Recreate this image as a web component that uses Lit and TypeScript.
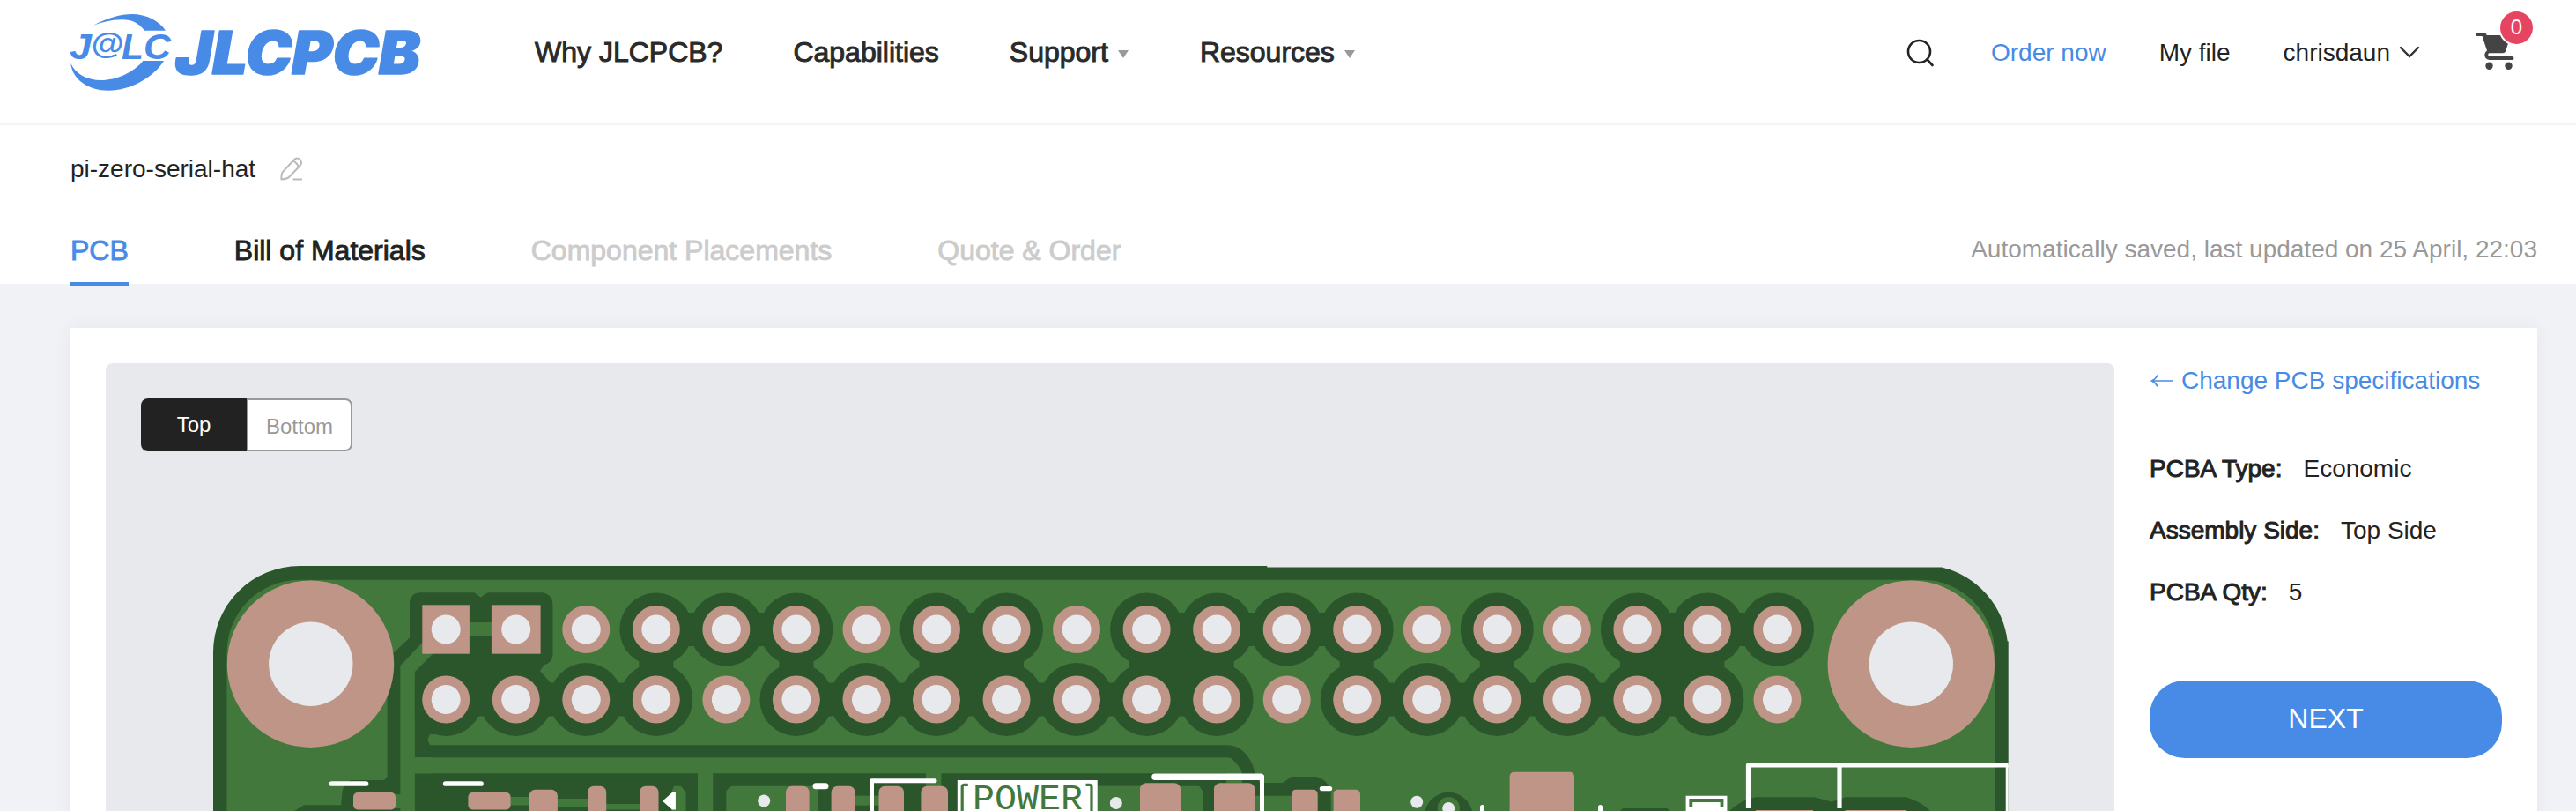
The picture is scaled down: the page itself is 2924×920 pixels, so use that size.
import { LitElement, html, svg, css } from "lit";
import { customElement, property } from "lit/decorators.js";

const PITCH = 79.54;
const FIRST = 506.2;
const ROWS = [714, 793.5];
const CLEAR = ["11011101101111010111", "11110111111101111110"];
const DARK = "#2b562c";
const LIGHT = "#43783c";
const PAD = "#be9586";
const BG = "#e7e9ed";

const px = (i: number) => FIRST + i * PITCH;
const has = (r: number, i: number) => i >= 0 && i < 20 && CLEAR[r][i] === "1";

@customElement("pcb-board")
export class PcbBoard extends LitElement {
  static styles = css`
    :host { display: block; width: 2280px; height: 508px; }
    svg { display: block; }
    .silk { font: 40px "Liberation Mono", monospace; }
  `;

  private clearances() {
    const out: unknown[] = [];
    for (let r = 0; r < 2; r++) {
      for (let i = 0; i < 20; i++) {
        if (!has(r, i) || (r === 0 && i < 2)) continue;
        out.push(svg`<circle cx=${px(i)} cy=${ROWS[r]} r="41.5"/>`);
        if (has(r, i + 1)) out.push(svg`<rect x=${px(i)} y=${ROWS[r] - 19} width=${PITCH} height="38"/>`);
        if (r === 0 && has(1, i)) {
          out.push(svg`<rect x=${px(i) - 19.5} y=${ROWS[0]} width="39" height="79.5"/>`);
          if (has(0, i + 1) && has(1, i + 1)) out.push(svg`<rect x=${px(i)} y=${ROWS[0]} width=${PITCH} height="79.5"/>`);
        }
      }
    }
    return out;
  }

  private pads() {
    const out: unknown[] = [];
    for (let r = 0; r < 2; r++)
      for (let i = 0; i < 20; i++) {
        if (!(r === 0 && i < 2)) out.push(svg`<circle cx=${px(i)} cy=${ROWS[r]} r="27" fill=${PAD}/>`);
      }
    return out;
  }

  private holes() {
    return ROWS.flatMap((y) => Array.from({ length: 20 }, (_, i) => svg`<circle cx=${px(i)} cy=${y} r="16.5"/>`));
  }

  private smd(x1: number, x2: number, y: number, h = 60, r = 7) {
    return svg`<rect x=${x1} y=${y} width=${x2 - x1} height=${h} rx=${r}/>`;
  }

  render() {
    return html`<svg width="2280" height="508" viewBox="120 412 2280 508">
      <path fill=${DARK} d="M242 930V740A98 98 0 0 1 340 642H1438.300V643.500H2204A98 98 0 0 1 2278.700 727.500H2279.700V930Z"/>
      <path fill=${LIGHT} d="M257.500 930V740A82.500 82.500 0 0 1 340 657.700H2181.300A82.700 82.700 0 0 1 2264 740.400V930Z"/>
      <g fill=${DARK}>
        ${this.clearances()}
        <path d="M465 683Q466 673 476 672.300H538Q542 674 545.700 677.700Q549 674 554 672.300H616Q627 674 627.500 686V744Q626 752 618 754L613 761L626 776V793H506V833H488L485.400 839L488 845.300H1393.600C1409 846 1420 858 1425 877V886H1410V877C1407 869 1402 864 1397 860L1392 859.300H470.700V762L454.600 755V930H345L334 920L345 913.300H387L389 895L398 885H436L439.600 881V740H447.500L465 723.300Z"/>
        <path d="M470.700 877.300H792V930H778.600V899L773 891.700H765L762 899V930H470.700Z"/>
        <path d="M809.300 877.300H1051V930H928.600V891.700H830L824.300 897V930H809.300Z"/>
        <path d="M1068.600 877.300H1392V888H1410V877H1425L1430 888H1456L1466 881H1494.600Q1504 884 1507 890L1510.700 897V930H1466V902.700H1424V930H1365V897L1361 891.700H1068.600Z"/>
        <rect x="1068.600" y="880" width="19" height="50"/>
        <path d="M1617 930A27.500 27.500 0 1 1 1671.500 930Z"/>
        <path d="M1839 920L1842 917H1892L1896 920Z"/>
        <path d="M1963 920Q1975 908 1993 904.300H2059L2070 907L2078.600 909.500L2088 907L2094.600 904.300H2163.600Q2182 910 2191 920Z"/>
      </g>
      <g fill=${LIGHT}>
        <path d="M454.600 930V755L479.300 729L492 741L470.700 762.300V930Z"/>
        <rect x="470" y="859.300" width="20" height="18"/>
        <rect x="532" y="706" width="27" height="16"/>
        <rect x="446" y="901" width="12" height="16"/>
        <rect x="579" y="904" width="23" height="9.500"/>
        <rect x="632" y="906" width="36" height="9"/>
        <rect x="687" y="912" width="40" height="6.500"/>
        <rect x="970" y="902.700" width="28" height="11"/>
        <rect x="1245" y="891.700" width="50" height="29"/>
        <circle cx="1644.300" cy="916.700" r="12.700"/>
      </g>
      <g fill=${PAD}>
        <circle cx="352.500" cy="753.200" r="94.700"/>
        <circle cx="2169.300" cy="753.200" r="94.700"/>
        <rect x="479.300" y="686.300" width="53.600" height="55.400"/>
        <rect x="557.900" y="686.300" width="55.700" height="55.400"/>
        ${this.smd(401, 449, 899, 19.4, 5)}
        ${this.smd(531.4, 579.6, 899, 19.4, 5)}
        ${this.smd(600.7, 632.9, 895.7)}
        ${this.smd(667, 688.2, 891.7)}
        ${this.smd(726, 747.5, 891.7)}
        ${this.smd(892, 918.6, 891.7)}
        ${this.smd(943.6, 970.7, 891.7)}
        ${this.smd(997.5, 1026, 891.7)}
        ${this.smd(1045.4, 1076, 891.7)}
        ${this.smd(1294, 1340, 888.3)}
        ${this.smd(1378, 1424.3, 888.3)}
        ${this.smd(1466, 1495.7, 895.7, 60, 5)}
        ${this.smd(1513.6, 1544, 895.7, 60, 5)}
        ${this.smd(1713.6, 1787, 875.7, 60, 5)}
        <rect x="1993" y="919" width="65" height="3"/>
        <rect x="2094.600" y="919" width="69" height="3"/>
      </g>
      ${this.pads()}
      <g fill=${BG}>
        ${this.holes()}
        <circle cx="352.800" cy="753.200" r="47.700"/>
        <circle cx="2169.300" cy="753.200" r="47.700"/>
        <circle cx="867.200" cy="908.500" r="7"/>
        <circle cx="1266.800" cy="911" r="7"/>
        <circle cx="1608.200" cy="909.700" r="7"/>
        <circle cx="1644.200" cy="917" r="7"/>
      </g>
      <g fill="none" stroke="#fff" stroke-linecap="round" stroke-linejoin="round">
        <path stroke-width="5.700" d="M376.500 889H415.500M505.700 889H546"/>
        <path stroke-width="7" d="M926 891.800H937"/>
        <path stroke-width="5" d="M989.500 930V885.700H1061"/>
        <path stroke-width="7.500" d="M1311 881.200H1431"/>
        <path stroke-width="5" d="M1432.500 881V930M1682.500 915.500V930M1816.500 915.500V930"/>
        <path stroke-width="5.400" d="M1500.500 894.600H1509.500"/>
        <path stroke-width="5.200" stroke-linecap="butt" d="M1984.500 917V868H2279.700M2088 868V917"/>
        <path stroke-width="2.900" stroke-linecap="butt" d="M2278.200 868V930"/>
      </g>
      <path fill="#fff" d="M752 908.700L763 899H766.900V918.500H763ZM1086.800 885H1245.700V930H1086.800ZM1913.600 902.700H1960.400V930H1913.600Z"/>
      <g fill="none" stroke=${LIGHT}>
        <path stroke-width="3.200" d="M1098.800 890.400H1094Q1092.200 890.600 1092.200 893V930M1232.500 890.400H1237Q1239 890.600 1239 893V930"/>
        <path stroke-width="3.800" d="M1919.300 915.500V908H1954.500V915.500"/>
      </g>
      <text class="silk" x="1104" y="918.300" fill=${LIGHT} textLength="125" lengthAdjust="spacingAndGlyphs">POWER</text>
    </svg>`;
  }
}

@customElement("site-header")
export class SiteHeader extends LitElement {
  static styles = css`
    :host { display: block; }
    .bar { box-sizing: border-box; height: 142px; padding: 0 48px 0 80px; border-bottom: 2px solid #f3f4f9; display: flex; align-items: flex-start; background: #fff; }
    .logo { display: block; width: 400px; height: 110px; margin-right: 127px; }
    .mark { font: italic 700 41px "Liberation Sans", sans-serif; }
    .at { font: italic 700 34px "Liberation Sans", sans-serif; }
    .word { font: italic 900 68px Inter, "Liberation Sans", sans-serif; stroke: #488be7; stroke-width: 1.6px; stroke-linejoin: round; }
    .nav { display: flex; height: 119px; align-items: center; gap: 80px; font-size: 32px; color: #2a2a2a; -webkit-text-stroke: 1px #2a2a2a; }
    .item { display: flex; align-items: center; white-space: nowrap; }
    .item:last-child { margin-left: 1px; }
    .caret { width: 0; height: 0; border: 6px solid transparent; border-top: 9px solid #999; border-bottom: 0; margin: 4px 0 0 11px; }
    .tools { margin-left: auto; display: flex; height: 119px; align-items: center; font-size: 28px; color: #222; white-space: nowrap; }
    .search { margin-right: 64px; }
    .order { color: #488be7; margin-right: 60px; }
    .file { margin-right: 60px; }
    .chev { margin: 0 63px 2px 10px; }
    .cart { position: relative; display: flex; width: 66px; margin-bottom: 4px; }
    .badge { position: absolute; left: 28px; top: -23px; width: 37px; height: 37px; border-radius: 50%; background: #e64562; color: #fff; font-size: 24px; line-height: 36px; text-align: center; box-shadow: 0 0 0 2px #fff; }
  `;

  render() {
    return html`<header class="bar">
      <svg class="logo" viewBox="80 0 400 110" fill="#488be7">
        <path d="M105.700 29C122 20 137 16 150 16C166 16 181 24 188 34.700H164.300C156 25 149 22 138 22.300C126 22.500 116 25 105.700 29Z"/>
        <path d="M80.300 71.700C82 90 100 102.700 123.300 102.700C148 102.700 174 88 186 69H162.300C152 82 132 91 115 91C98 91 85 83 80.300 71.700Z"/>
        <text class="mark" x="79" y="66.500" textLength="25" lengthAdjust="spacingAndGlyphs">J</text>
        <text class="at" x="103" y="60.500" textLength="37" lengthAdjust="spacingAndGlyphs">@</text>
        <text class="mark" x="138" y="66.500" textLength="25" lengthAdjust="spacingAndGlyphs">L</text>
        <text class="mark" x="163" y="66.500" textLength="31" lengthAdjust="spacingAndGlyphs">C</text>
        <text class="word" x="199" y="84" textLength="278" lengthAdjust="spacingAndGlyphs">JLCPCB</text>
      </svg>
      <nav class="nav">
        <span class="item">Why JLCPCB?</span>
        <span class="item">Capabilities</span>
        <span class="item">Support<i class="caret"></i></span>
        <span class="item">Resources<i class="caret"></i></span>
      </nav>
      <div class="tools">
        <svg class="search" width="32" height="32" viewBox="0 0 32 32" fill="none" stroke="#222" stroke-width="2.600" stroke-linecap="round"><circle cx="14.500" cy="14.500" r="12.500"/><path d="M23.500 23.500L29.500 30"/></svg>
        <span class="order">Order now</span>
        <span class="file">My file</span>
        <span>chrisdaun</span>
        <svg class="chev" width="24" height="14" viewBox="0 0 24 14" fill="none" stroke="#333" stroke-width="2.400" stroke-linecap="round"><path d="M2 2L12 12L22 2"/></svg>
        <div class="cart">
          <svg width="44" height="44" viewBox="0 0 44 44" fill="#444"><path d="M2 1H10Q11.500 1 12 2.500L12.700 4H40L34 22.500Q33.200 24.300 31 24.300H15.500Q14.300 24.500 14.200 26Q14.300 28 16 28H41.500Q43.500 28.300 43.500 30Q43.500 32 41.500 32H16Q11 31.500 10.300 27Q10.300 23 13 21.500L7.500 5H2Q.2 4.800 .2 3Q.2 1.200 2 1Z"/><circle cx="15.500" cy="38.800" r="4.200"/><circle cx="37.500" cy="38.800" r="4.200"/></svg>
          <span class="badge">0</span>
        </div>
      </div>
    </header>`;
  }
}

@customElement("spec-row")
export class SpecRow extends LitElement {
  @property() label = "";
  @property() value = "";
  static styles = css`
    :host { display: flex; gap: 24px; height: 70px; align-items: center; font-size: 28px; color: #222; white-space: nowrap; }
    .label { -webkit-text-stroke: 1px #222; }
  `;
  render() {
    return html`<span class="label">${this.label}:</span><span>${this.value}</span>`;
  }
}

@customElement("app-root")
export class AppRoot extends LitElement {
  static styles = css`
    :host { display: block; height: 920px; overflow: hidden; background: #f0f2f6; font-family: "Liberation Sans", Arial, sans-serif; }
    .project { height: 180px; box-sizing: border-box; background: #fff; padding: 0 44px 0 80px; display: flex; flex-direction: column; }
    .name { display: flex; align-items: center; gap: 27px; height: 100px; font-size: 28px; color: #222; }
    .tabs { display: flex; gap: 120px; height: 80px; font-size: 32px; }
    .tab { height: 82px; box-sizing: border-box; line-height: 85px; white-space: nowrap; color: #222; -webkit-text-stroke: 0.9px currentColor; }
    .active { color: #488be7; border-bottom: 4px solid #488be7; }
    .off { color: #ccc; }
    .saved { margin-left: auto; font-size: 28px; line-height: 81px; color: #999; }
    .card { margin: 50px 44px 0 80px; height: 600px; box-sizing: border-box; padding: 40px 40px 0; background: #fff; box-shadow: 0 0 20px rgba(60, 70, 100, 0.06); display: flex; gap: 40px; }
    .view { width: 2280px; height: 560px; background: #e7e9ed; border-radius: 8px; display: grid; }
    .view > * { grid-area: 1 / 1; }
    .toggle { margin: 40px; display: flex; width: 240px; height: 60px; font-size: 24px; z-index: 1; }
    .top { width: 120px; background: #222; color: #fff; border-radius: 8px 0 0 8px; text-align: center; line-height: 60px; }
    .bottom { width: 120px; box-sizing: border-box; background: #fff; color: #999; border: 2px solid #999; border-radius: 0 8px 8px 0; text-align: center; line-height: 60px; }
    .side { width: 400px; display: flex; flex-direction: column; }
    .link { display: flex; align-items: center; gap: 8px; height: 40px; font-size: 28px; color: #488be7; white-space: nowrap; margin-bottom: 45px; }
    .next { margin-top: 65px; height: 88px; border-radius: 40px; background: #488be7; color: #fff; font-size: 32px; line-height: 87px; text-align: center; }
  `;

  render() {
    return html`
      <site-header></site-header>
      <section class="project">
        <div class="name">pi-zero-serial-hat
          <svg width="28" height="30" viewBox="0 0 28 30" fill="none" stroke="#bbb" stroke-width="2" stroke-linejoin="round" stroke-linecap="round"><path d="M3.500 18.500L16.500 4.500Q20 .8 23.500 4Q26.500 7.500 23.500 11L10.500 24.500Q7 26.300 2.500 26.500Q2 22 3.500 18.500ZM15.500 5.500Q20 7.500 22 12.500"/><path stroke-linecap="butt" d="M15.500 26.500H26"/></svg>
        </div>
        <div class="tabs">
          <span class="tab active">PCB</span>
          <span class="tab">Bill of Materials</span>
          <span class="tab off">Component Placements</span>
          <span class="tab off">Quote &amp; Order</span>
          <span class="saved">Automatically saved, last updated on 25 April, 22:03</span>
        </div>
      </section>
      <main class="card">
        <div class="view">
          <pcb-board></pcb-board>
          <div class="toggle"><span class="top">Top</span><span class="bottom">Bottom</span></div>
        </div>
        <aside class="side">
          <div class="link"><svg width="28" height="18" viewBox="0 0 28 18" fill="none" stroke="#488be7" stroke-width="1.600"><path d="M26 9H2.500M9 2.500Q7 7 2.500 9Q7 11 9 15.500"/></svg>Change PCB specifications</div>
          <spec-row label="PCBA Type" value="Economic"></spec-row>
          <spec-row label="Assembly Side" value="Top Side"></spec-row>
          <spec-row label="PCBA Qty" value="5"></spec-row>
          <div class="next">NEXT</div>
        </aside>
      </main>
    `;
  }
}
